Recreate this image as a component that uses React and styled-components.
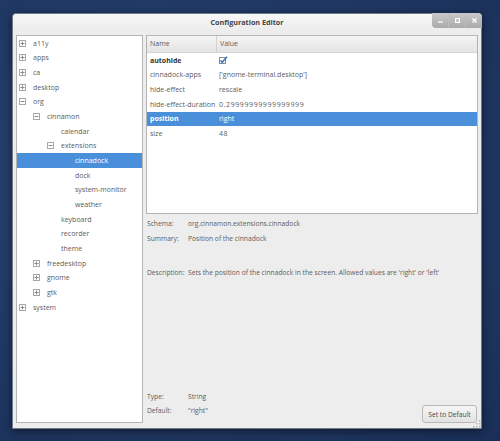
import React from 'react'
import styled, { createGlobalStyle } from 'styled-components'

const Global = createGlobalStyle`
  html, body { margin: 0; padding: 0; }
  body {
    width: 500px;
    height: 441px;
    overflow: hidden;
    background: radial-gradient(ellipse at 30% 40%, #2a4676 0%, #213a66 45%, #1a2f57 100%);
    font-family: "Open Sans", "DejaVu Sans", sans-serif;
  }
`

const Desktop = styled.div`
  padding: 13px 18px 12px 12px;
  box-sizing: border-box;
  height: 441px;
`

const Window = styled.div`
  position: relative;
  width: 470px;
  height: 416px;
  box-sizing: border-box;
  background: #ededed;
  border: 1px solid #6f7a88;
  border-radius: 4px 4px 0 0;
  box-shadow: 0 2px 8px rgba(0, 0, 0, 0.5);
  display: flex;
  flex-direction: column;
`

const TitleBar = styled.div`
  height: 17px;
  display: grid;
  grid-template-columns: 49px 1fr 49px;
  background: linear-gradient(#f7f7f7, #ececec);
  border-radius: 4px 4px 0 0;
`

const Title = styled.div`
  grid-column: 2;
  text-align: center;
  font-weight: bold;
  font-size: 7.2px;
  line-height: 17px;
  color: #444;
`

const Controls = styled.div`
  grid-column: 3;
  height: 15px;
  margin-top: -1px;
  margin-right: -1px;
  display: flex;
  background: linear-gradient(#c9c9c9, #aaaaaa);
  border-radius: 0 4px 0 4px;
`

const CtrlButton = styled.div`
  flex: 1;
  display: flex;
  align-items: center;
  justify-content: center;
  border-left: ${p => (p.$first ? 'none' : '1px solid #bdbdbd')};
`

const Content = styled.div`
  flex: 1;
  display: flex;
  gap: 3px;
  padding: 4px 3px 5px 3px;
  min-height: 0;
`

const TreePane = styled.div`
  width: 127px;
  box-sizing: border-box;
  background: #fff;
  border: 1px solid #b4b4b4;
  flex-shrink: 0;
`

const TreeRow = styled.div`
  height: 14.67px;
  display: flex;
  align-items: center;
  padding-left: ${p => 2 + p.$level * 14}px;
  background: ${p => (p.$selected ? '#4a8fd9' : 'transparent')};
  color: ${p => (p.$selected ? '#ffffff' : '#5c5c5c')};
  font-size: 7px;
`

const ExpSlot = styled.div`
  width: 14px;
  height: 14px;
  display: flex;
  align-items: center;
  flex-shrink: 0;
`

const RightCol = styled.div`
  flex: 1;
  display: flex;
  flex-direction: column;
  min-width: 0;
`

const Table = styled.div`
  height: 179px;
  box-sizing: border-box;
  background: #fff;
  border: 1px solid #b4b4b4;
  flex-shrink: 0;
`

const HeaderRow = styled.div`
  height: 17px;
  display: grid;
  grid-template-columns: 69px 1fr;
  background: linear-gradient(#f4f4f4, #e4e4e4);
  border-bottom: 1px solid #d6d6d6;
  box-sizing: border-box;
`

const HeaderCell = styled.div`
  font-size: 7px;
  color: #5c5c5c;
  padding-left: 3px;
  line-height: 16px;
  border-left: ${p => (p.$second ? '1px solid #d0d0d0' : 'none')};
`

const KeyRow = styled.div`
  height: 14.67px;
  display: grid;
  grid-template-columns: 70px 1fr;
  align-items: center;
  background: ${p => (p.$selected ? '#4a8fd9' : 'transparent')};
  color: ${p => (p.$selected ? '#fff' : '#5c5c5c')};
  font-size: 7px;
`

const KeyName = styled.div`
  padding-left: 3px;
  font-weight: ${p => (p.$bold ? 'bold' : 'normal')};
  color: ${p => (p.$selected ? '#fff' : p.$bold ? '#333' : '#5c5c5c')};
  white-space: nowrap;
`

const KeyValue = styled.div`
  padding-left: 2px;
  white-space: nowrap;
  letter-spacing: ${p => (p.$mono ? '0.6px' : '0')};
`

const Info = styled.div`
  flex: 1;
  display: flex;
  flex-direction: column;
  justify-content: space-between;
  padding-top: 3px;
`

const InfoGrid = styled.div`
  display: grid;
  grid-template-columns: 41px 1fr;
  grid-auto-rows: minmax(14.67px, auto);
  align-items: start;
  font-size: 6.7px;
  line-height: 14.67px;
  color: #5c5c5c;
  padding-left: 1px;
  padding-bottom: ${p => (p.$bottom ? '4px' : '0')};
`

const Label = styled.div`
  white-space: nowrap;
`

const Value = styled.div`
  white-space: nowrap;
`

const Spacer = styled.div`
  grid-column: 1 / span 2;
  height: ${p => p.$h}px;
`

const Bottom = styled.div`
  display: flex;
  align-items: flex-end;
  justify-content: space-between;
`

const DefaultButton = styled.button`
  width: 55px;
  height: 18px;
  margin-right: 1px;
  font-family: inherit;
  font-size: 6.7px;
  color: #4a4a4a;
  background: linear-gradient(#f6f6f6, #e2e2e2);
  border: 1px solid #b8b8b8;
  border-radius: 3px;
  padding: 0;
`

const Grip = styled.svg`
  position: absolute;
  right: 0;
  bottom: 0;
`

const Expander = ({ open }) => (
  <svg width="7" height="7" viewBox="0 0 7 7">
    <rect x="0.5" y="0.5" width="6" height="6" fill="#fff" stroke="#a8a8a8" />
    <line x1="1.5" y1="3.5" x2="5.5" y2="3.5" stroke="#8a8a8a" />
    {!open && <line x1="3.5" y1="1.5" x2="3.5" y2="5.5" stroke="#8a8a8a" />}
  </svg>
)

const tree = [
  { label: 'a11y', level: 0, exp: 'plus' },
  { label: 'apps', level: 0, exp: 'plus' },
  { label: 'ca', level: 0, exp: 'plus' },
  { label: 'desktop', level: 0, exp: 'plus' },
  { label: 'org', level: 0, exp: 'minus' },
  { label: 'cinnamon', level: 1, exp: 'minus' },
  { label: 'calendar', level: 2 },
  { label: 'extensions', level: 2, exp: 'minus' },
  { label: 'cinnadock', level: 3, selected: true },
  { label: 'dock', level: 3 },
  { label: 'system-monitor', level: 3 },
  { label: 'weather', level: 3 },
  { label: 'keyboard', level: 2 },
  { label: 'recorder', level: 2 },
  { label: 'theme', level: 2 },
  { label: 'freedesktop', level: 1, exp: 'plus' },
  { label: 'gnome', level: 1, exp: 'plus' },
  { label: 'gtk', level: 1, exp: 'plus' },
  { label: 'system', level: 0, exp: 'plus' },
]

const keys = [
  { name: 'autohide', bold: true, check: true },
  { name: 'cinnadock-apps', value: "['gnome-terminal.desktop']" },
  { name: 'hide-effect', value: 'rescale' },
  { name: 'hide-effect-duration', value: '0.29999999999999999', mono: true },
  { name: 'position', value: 'right', bold: true, selected: true },
  { name: 'size', value: '48', mono: true },
]

const Check = () => (
  <svg width="9" height="8" viewBox="0 0 9 8" style={{ display: 'block' }}>
    <rect x="0.5" y="1.5" width="6" height="6" fill="#fff" stroke="#8c8c8c" />
    <path d="M1.5 4.5 L3.2 6.3 L8 0.8" fill="none" stroke="#3b74c4" strokeWidth="1.6" />
  </svg>
)

export default function App() {
  return (
    <>
      <Global />
      <Desktop>
        <Window>
          <TitleBar>
            <Title>Configuration Editor</Title>
            <Controls>
              <CtrlButton $first>
                <svg width="5" height="5" viewBox="0 0 5 5"><rect x="0" y="3.5" width="5" height="1.2" fill="#fff" /></svg>
              </CtrlButton>
              <CtrlButton>
                <svg width="5" height="5" viewBox="0 0 5 5"><rect x="0.6" y="0.6" width="3.8" height="3.8" fill="none" stroke="#fff" strokeWidth="1.2" /></svg>
              </CtrlButton>
              <CtrlButton>
                <svg width="5" height="5" viewBox="0 0 5 5"><path d="M0.5 0.5 L4.5 4.5 M4.5 0.5 L0.5 4.5" stroke="#fff" strokeWidth="1.3" /></svg>
              </CtrlButton>
            </Controls>
          </TitleBar>
          <Content>
            <TreePane>
              {tree.map(n => (
                <TreeRow key={n.label} $level={n.level} $selected={n.selected}>
                  <ExpSlot>{n.exp && <Expander open={n.exp === 'minus'} />}</ExpSlot>
                  <span>{n.label}</span>
                </TreeRow>
              ))}
            </TreePane>
            <RightCol>
              <Table>
                <HeaderRow>
                  <HeaderCell>Name</HeaderCell>
                  <HeaderCell $second>Value</HeaderCell>
                </HeaderRow>
                {keys.map(k => (
                  <KeyRow key={k.name} $selected={k.selected}>
                    <KeyName $bold={k.bold} $selected={k.selected}>{k.name}</KeyName>
                    <KeyValue $mono={k.mono}>{k.check ? <Check /> : k.value}</KeyValue>
                  </KeyRow>
                ))}
              </Table>
              <Info>
                <InfoGrid>
                  <Label>Schema:</Label>
                  <Value>org.cinnamon.extensions.cinnadock</Value>
                  <Label>Summary:</Label>
                  <Value>Position of the cinnadock</Value>
                  <Spacer $h={20} />
                  <Label>Description:</Label>
                  <Value>Sets the position of the cinnadock in the screen. Allowed values are 'right' or 'left'</Value>
                </InfoGrid>
                <Bottom>
                  <InfoGrid $bottom>
                    <Label>Type:</Label>
                    <Value>String</Value>
                    <Label>Default:</Label>
                    <Value>"right"</Value>
                  </InfoGrid>
                  <DefaultButton>Set to Default</DefaultButton>
                </Bottom>
              </Info>
            </RightCol>
          </Content>
          <Grip width="9" height="9" viewBox="0 0 9 9">
            {[[7, 1], [7, 4], [7, 7], [4, 4], [4, 7], [1, 7]].map(([x, y]) => (
              <rect key={`${x}-${y}`} x={x} y={y} width="1.5" height="1.5" fill="#b0b0b0" />
            ))}
          </Grip>
        </Window>
      </Desktop>
    </>
  )
}
